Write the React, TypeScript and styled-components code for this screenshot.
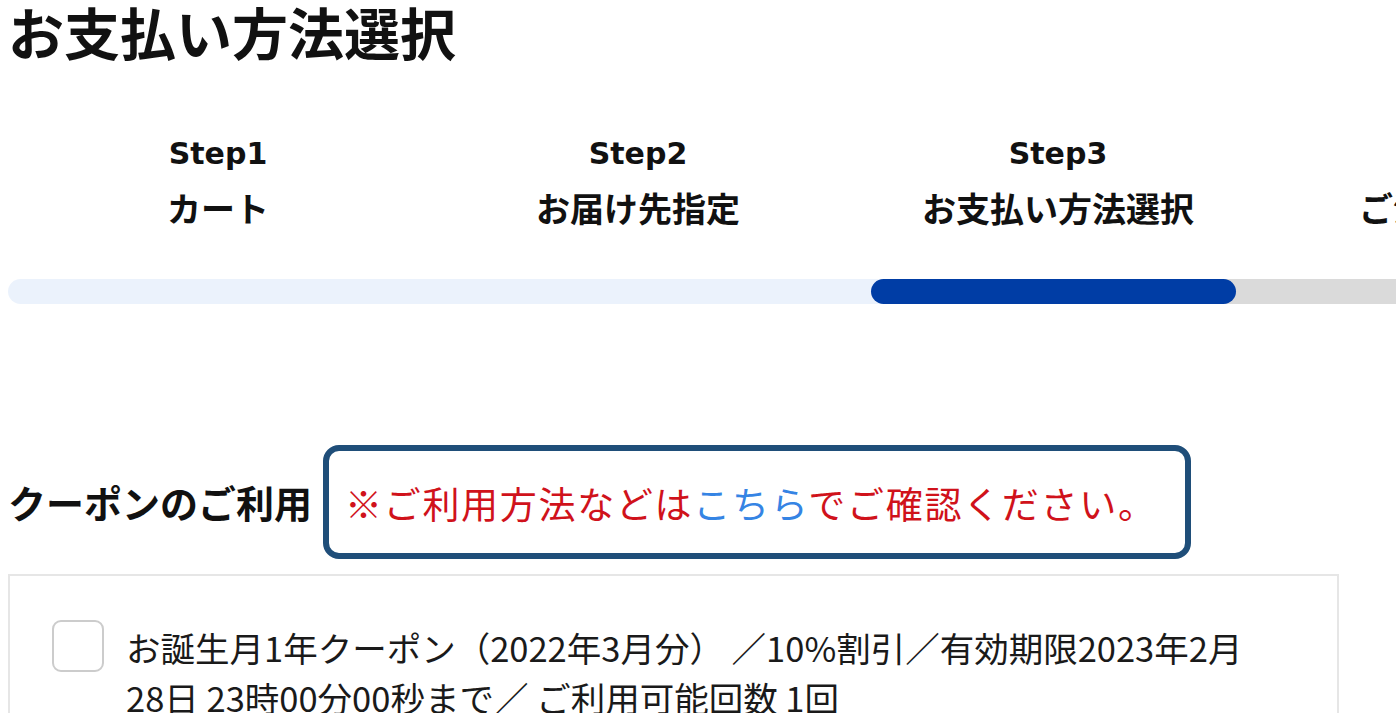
import styled, { createGlobalStyle } from "styled-components";

const GlobalStyle = createGlobalStyle`
  html, body {
    margin: 0;
    padding: 0;
    background: #ffffff;
    overflow: hidden;
  }
  body {
    font-family: "Noto Sans CJK JP", "Noto Sans", sans-serif;
    color: #111111;
  }
`;

const Page = styled.div`
  width: 1396px;
  height: 713px;
  padding-left: 8px;
  box-sizing: border-box;
  overflow: hidden;
`;

const Title = styled.h1`
  margin: 0;
  font-size: 56px;
  line-height: 62px;
  font-weight: 700;
`;

const Steps = styled.div`
  width: 1680px;
  margin-top: 75px;
  display: grid;
  grid-template-columns: repeat(4, 420px);
`;

const Step = styled.div`
  display: flex;
  flex-direction: column;
  align-items: center;
`;

const StepNo = styled.span`
  font-family: "DejaVu Sans", "Noto Sans", sans-serif;
  font-weight: 700;
  font-size: 30px;
  line-height: 34px;
`;

const StepName = styled.span`
  margin-top: 17px;
  font-size: 34px;
  font-weight: 700;
  line-height: 40px;
`;

// progress track: light blue up to the current step, grey afterwards
const Track = styled.div<{ $split: number }>`
  width: 1680px;
  height: 25px;
  margin-top: 51px;
  border-radius: 13px;
  display: grid;
  grid-template-columns: repeat(4, 420px);
  background: linear-gradient(
    to right,
    #ebf2fc 0,
    #ebf2fc ${(p) => p.$split}px,
    #dadada ${(p) => p.$split}px
  );
`;

const Pill = styled.div<{ $col: number }>`
  grid-column: ${(p) => p.$col};
  margin: 0 32px 0 23px;
  border-radius: 13px;
  background: #003da5;
`;

const CouponHead = styled.div`
  margin-top: 141px;
  display: flex;
  align-items: center;
  gap: 11px;
`;

const CouponTitle = styled.h2`
  margin: 0;
  font-size: 38px;
  font-weight: 700;
  line-height: 44px;
`;

const Notice = styled.div`
  width: 868px;
  height: 114px;
  box-sizing: border-box;
  border: 6px solid #1f4e79;
  border-radius: 16px;
  display: flex;
  align-items: center;
  padding: 2px 0 0 16px;
  font-size: 37px;
  letter-spacing: 1.7px;
  color: #d0121b;
  white-space: nowrap;
`;

const HereLink = styled.a`
  color: #3584e4;
  text-decoration: none;
`;

const CouponCard = styled.div`
  width: 1331px;
  height: 200px;
  margin-top: 15px;
  box-sizing: border-box;
  border: 2px solid #e6e6e6;
  border-bottom: none;
  padding: 44px 40px 0 42px;
  display: flex;
  align-items: flex-start;
  gap: 22px;
`;

const Check = styled.span`
  flex: none;
  width: 52px;
  height: 52px;
  box-sizing: border-box;
  border: 2px solid #cccccc;
  border-radius: 9px;
  background: #ffffff;
`;

const CouponText = styled.label`
  width: 1140px;
  margin-top: 2px;
  font-size: 34.5px;
  line-height: 50px;
  color: #1a1a1a;
`;

const steps = [
  { no: "Step1", name: "カート" },
  { no: "Step2", name: "お届け先指定" },
  { no: "Step3", name: "お支払い方法選択" },
  { no: "Step4", name: "ご注文内容確認" },
];

export default function App() {
  const current = 3;
  return (
    <Page>
      <GlobalStyle />
      <Title>お支払い方法選択</Title>

      <Steps>
        {steps.map((s) => (
          <Step key={s.no}>
            <StepNo>{s.no}</StepNo>
            <StepName>{s.name}</StepName>
          </Step>
        ))}
      </Steps>

      <Track $split={(current - 0.5) * 420}>
        <Pill $col={current} />
      </Track>

      <CouponHead>
        <CouponTitle>クーポンのご利用</CouponTitle>
        <Notice>
          <span>
            ※ご利用方法などは<HereLink href="#">こちら</HereLink>でご確認ください。
          </span>
        </Notice>
      </CouponHead>

      <CouponCard>
        <Check />
        <CouponText>
          お誕生月1年クーポン（2022年3月分） ／10%割引／有効期限2023年2月28日 23時00分00秒まで／ ご利用可能回数 1回
        </CouponText>
      </CouponCard>
    </Page>
  );
}
